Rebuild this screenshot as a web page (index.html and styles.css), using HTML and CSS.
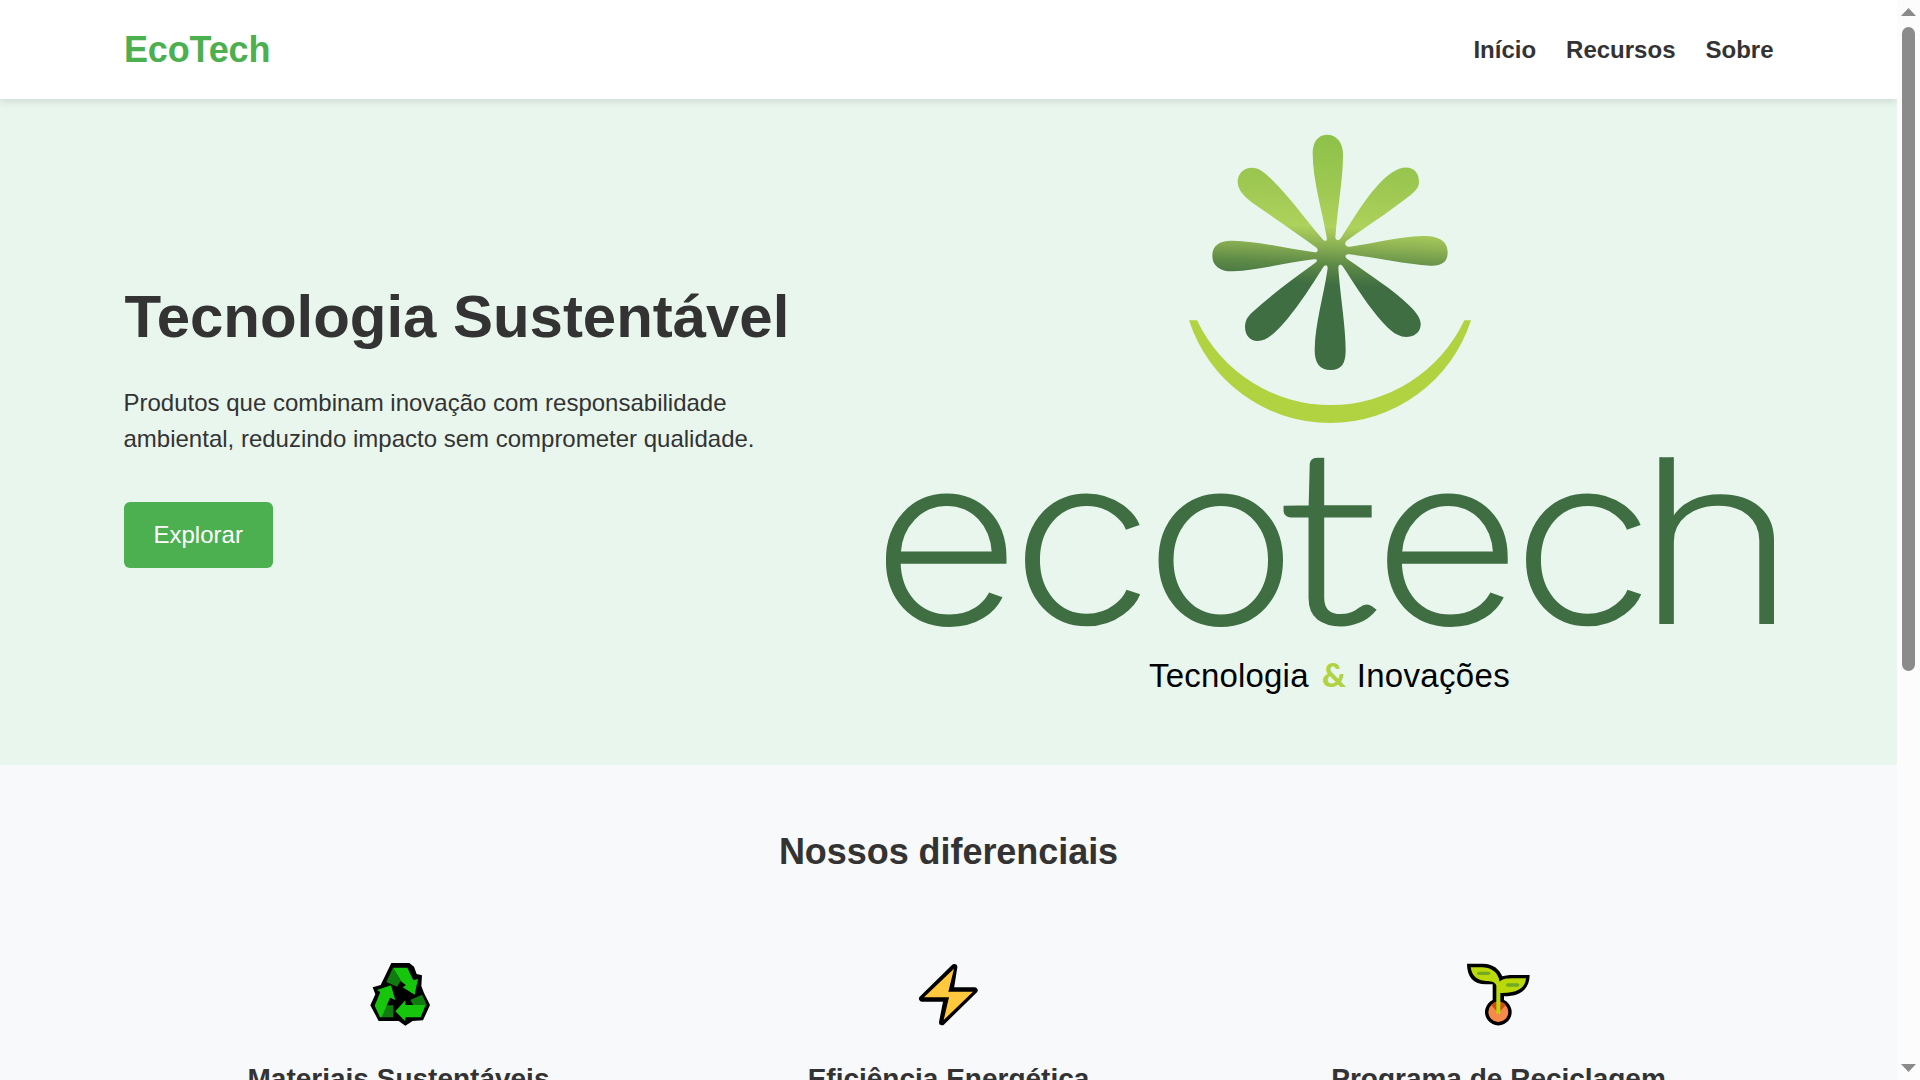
FILE: index.html
```
<!DOCTYPE html>
<html lang="pt-BR">
<head>
<meta charset="utf-8">
<title>EcoTech</title>
<link rel="stylesheet" href="styles.css">
</head>
<body>
<div class="page">
  <header class="header">
    <div class="logo">EcoTech</div>
    <nav class="nav"><a>Início</a><a>Recursos</a><a>Sobre</a></nav>
  </header>
  <section class="hero">
    <div class="hero-text">
      <h1>Tecnologia Sustentável</h1>
      <p>Produtos que combinam inovação com responsabilidade ambiental, reduzindo impacto sem comprometer qualidade.</p>
      <a class="button">Explorar</a>
    </div>
    <svg class="brand" viewBox="886 132 888 600" role="img" aria-label="ecotech">
      <defs>
        <linearGradient id="leaf" gradientUnits="userSpaceOnUse" x1="500" y1="45" x2="465" y2="750">
          <stop offset="0" stop-color="#8dc149"/>
          <stop offset=".24" stop-color="#9fc953"/>
          <stop offset=".39" stop-color="#aed25c"/>
          <stop offset=".47" stop-color="#8bb053"/>
          <stop offset=".55" stop-color="#5f8b47"/>
          <stop offset=".635" stop-color="#3f6e42"/>
        </linearGradient>
        <clipPath id="ascender"><rect x="886" y="457.3" width="888" height="180"/></clipPath>
      </defs>
      <g transform="translate(1170 120) scale(.33333)">
        <path fill="url(#leaf)" d="M470 44C499 44 519 66 519 103C519 180 503 260 496 352C497 363 508 362 513 354C560 280 610 195 665 158C710 127 747 145 747 185C747 200 740 210 722 225C665 270 600 312 532 361C521 369 525 382 540 380C610 370 690 350 755 348C810 347 833 365 833 397C833 425 816 438 782 437C710 434 620 413 538 403C525 401 523 411 533 418C600 465 670 510 717 556C745 583 753 600 752 615C750 640 730 651 708 651C675 650 650 622 622 589C582 540 552 490 518 439C510 431 505 434 505 445C511 530 527 620 527 690C527 732 514 750 482 750C450 750 434 730 434 690C435 610 462 525 473 445C473 432 465 434 460 441C425 497 390 550 352 597C315 640 290 663 263 663C240 663 225 645 225 620C226 600 233 590 247 577C305 524 370 476 434 430C444 423 443 416 431 418C350 428 260 451 190 454C150 455 127 438 127 407C127 375 150 361 187 362C265 364 350 385 433 397C445 398 446 388 438 382C380 340 310 292 247 248C215 225 203 205 203 184C204 160 222 143 245 143C272 143 293 165 325 199C372 249 415 310 458 358C466 366 472 363 470 352C456 270 428 180 428 100C428 64 445 45 470 44Z"/>
        <path fill="#b1d342" d="M57 601H81A443.5 443.5 0 0 0 883 601H903A444.5 444.5 0 0 1 57 601Z"/>
      </g>
      <g class="wordmark" clip-path="url(#ascender)">
        <text transform="translate(872.6 622.7) scale(1.102 1)">e</text>
        <text transform="translate(1011.5 622.7) scale(1.114 1)">c</text>
        <text transform="translate(1144.9 622.7) scale(1.121 1)">o</text>
        <text class="tee" transform="translate(1280.7 619.5) scale(1.22 1)">t</text>
        <text transform="translate(1373.7 622.7) scale(1.102 1)">e</text>
        <text transform="translate(1512.5 622.7) scale(1.114 1)">c</text>
        <text class="aitch" transform="translate(1635.5 623) scale(1.198 1)">h</text>
      </g>
      <g class="tagline">
        <text x="1149" y="687.3" textLength="159.5">Tecnologia</text>
        <text class="amp" x="1321.9" y="687.3">&amp;</text>
        <text x="1356.7" y="687.3" textLength="153">Inovações</text>
      </g>
    </svg>
  </section>
  <section class="features">
    <h2>Nossos diferenciais</h2>
    <div class="cards">
      <article class="card">
        <svg class="icon" viewBox="0 0 300 270">
          <path d="M124 39H178L192 50L200 72L216 76L214 108L222 129L240 165L219 211L188 213L166 227L146 213H86L61 166L76 133L68 112L92 105Z" fill="#000"/>
          <path d="M129 53L152 93L141 110L109 96ZM103 166H130V202H94ZM181 150L216 134L231 166H190Z" fill="#107c10"/>
          <path d="M129 53H172L190 91L204 87L194 134L158 112L168 106L153 94ZM81 120L123 106L136 150L120 143L95 202H90L74 167L91 126ZM136 184L166 151V165H227L212 202H166V214Z" fill="#16c60c"/>
        </svg>
        <h3>Materiais Sustentáveis</h3>
      </article>
      <article class="card">
        <svg class="icon" viewBox="0 0 300 270">
          <path d="M163 51L66 146H140L126 217L224 121H152Z" fill="#ffc83d" stroke="#000" stroke-width="18" stroke-linejoin="round"/>
          <path d="M162 56L72 142H147L131 210L219 125H145Z" fill="#ffc83d"/>
        </svg>
        <h3>Eficiência Energética</h3>
      </article>
      <article class="card">
        <svg class="icon" viewBox="0 0 300 270">
          <path d="M51 41H98C130 42 147 56 157 79C170 74 190 75 239 75C239 116 212 139 162 139V150A40 40 0 1 1 128 150V103H108C70 103 51 80 51 41Z" fill="#000"/>
          <circle cx="145" cy="186" r="30" fill="#f7894a"/>
          <path d="M123 165Q134 154 145 154Q156 154 168 165L150 184H140Z" fill="#ca5010"/>
          <path d="M62 52H99C128 54 145 70 149 95C159 84 170 84 228 85C226 116 200 130 151 129V191H139V107C136 94 120 94 108 93C80 92 65 76 62 52Z" fill="#bad80a"/>
          <path d="M86 70H116M173 105H203" stroke="#73aa24" stroke-width="10" stroke-linecap="round"/>
        </svg>
        <h3>Programa de Reciclagem</h3>
      </article>
    </div>
  </section>
</div>
<aside class="scrollbar">
  <i class="arrow up"></i><i class="thumb"></i><i class="arrow down"></i>
</aside>
</body>
</html>
```
FILE: styles.css
```
* { box-sizing: border-box; margin: 0; padding: 0; }
body {
  display: flex;
  height: 1080px;
  overflow: hidden;
  font-family: "Liberation Sans", Arial, sans-serif;
  font-size: 24px;
  line-height: 1.5;
  color: #333;
  background: #f8f9fb;
}
.page { width: 1897px; height: 1080px; overflow: hidden; }
.header {
  position: relative;
  display: flex;
  justify-content: space-between;
  align-items: center;
  height: 99px;
  padding: 0 123.5px;
  background: #fff;
  box-shadow: 0 3px 7.5px rgba(0, 0, 0, .1);
}
.logo { margin-left: .5px; font-size: 36px; font-weight: bold; letter-spacing: -.15px; color: #4caf50; }
.nav { display: flex; gap: 30px; font-weight: bold; }
.hero {
  display: flex;
  justify-content: space-between;
  height: 666px;
  padding: 0 123px 0 123.5px;
  background: #e8f6ee;
}
.hero-text { width: 680px; padding-top: 173px; }
.hero h1 { margin: 0 0 23px 1px; font-size: 60px; letter-spacing: -.04px; }
.hero p { margin-bottom: 45px; }
.button {
  display: inline-block;
  padding: 15px 30px;
  border-radius: 6px;
  color: #fff;
  background: #4caf50;
}
.brand { width: 888px; height: 600px; margin-top: 33px; }
.wordmark {
  font-family: Inter, sans-serif;
  font-size: 231px;
  font-weight: 200;
  fill: #3f6e42;
  stroke: #3f6e42;
  stroke-width: 3px;
}
.tee { font-family: Lato, sans-serif; font-size: 233px; font-weight: 100; stroke-width: 10px; }
.aitch { stroke-width: 2px; }
.tagline { font-size: 33px; fill: #000; }
.amp { font-family: Lato, sans-serif; font-weight: 900; fill: #b1d342; }
.features { padding: 60px 123.5px 0; background: #f8f9fb; }
.features h2 { font-size: 36px; letter-spacing: -.05px; text-align: center; margin-bottom: 71px; }
.cards { display: grid; grid-template-columns: repeat(3, 1fr); }
.card { display: flex; flex-direction: column; align-items: center; }
.icon { width: 100px; height: 90px; margin-left: 2px; }
.card h3 { font-size: 28px; line-height: 42px; margin-top: 18px; }
.scrollbar {
  display: flex;
  flex-direction: column;
  align-items: center;
  width: 23px;
  height: 1080px;
  padding: 8px 0;
  background: #fcfcfc;
}
.arrow { width: 15px; height: 8px; background: #8b8b8b; }
.up { clip-path: polygon(50% 0, 100% 100%, 0 100%); }
.down { clip-path: polygon(0 0, 100% 0, 50% 100%); margin-top: auto; }
.thumb { width: 13px; height: 644px; margin-top: 11px; border-radius: 7px; background: #8b8b8b; }
```
